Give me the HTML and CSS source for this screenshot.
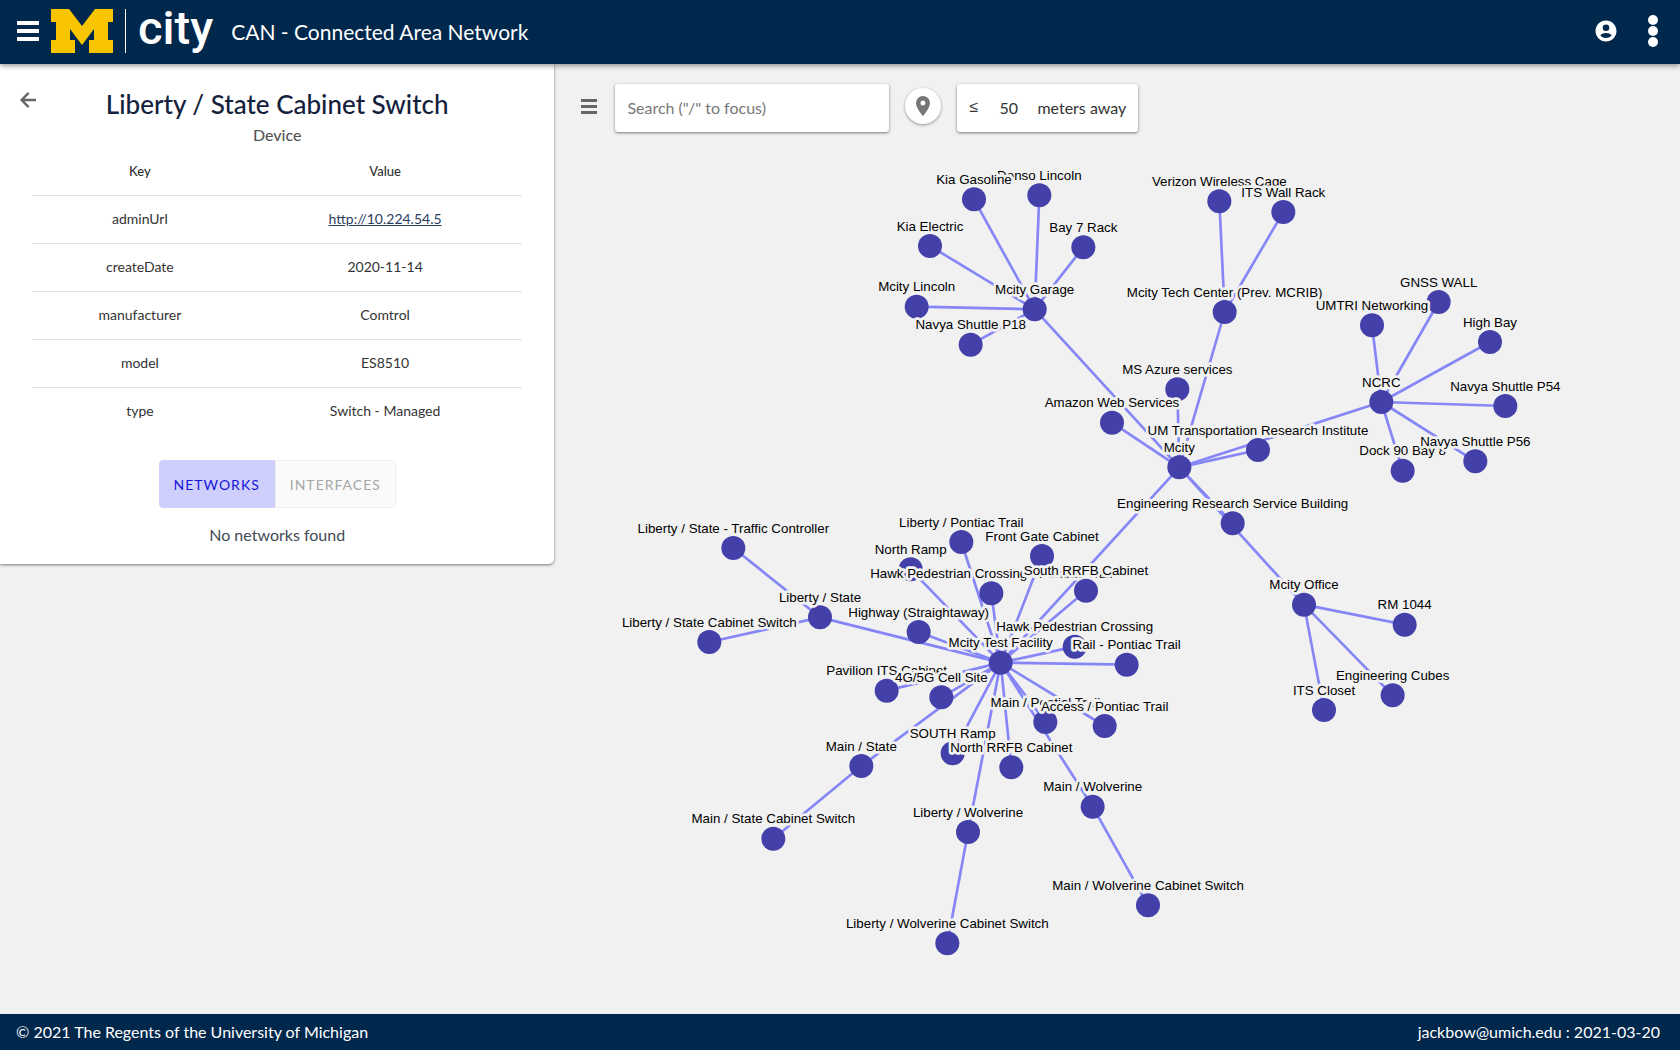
FILE: index.html
```html
<!DOCTYPE html>
<html lang="en">
<head>
<meta charset="utf-8">
<title>Mcity CAN - Connected Area Network</title>
<link rel="stylesheet" href="styles.css">
</head>
<body>
<header class="topbar">
  <button class="icon-button" aria-label="Menu">
    <svg class="icon-menu" viewBox="0 0 22 20" width="22" height="20"><path d="M0 0h22v4H0zM0 8h22v4H0zM0 16h22v4H0z"/></svg>
  </button>
  <a class="brand" href="#" aria-label="Mcity home">
    <svg viewBox="0 0 62 44" width="62" height="44"><path fill="#f8c500" d="M0 0h18l13 17L44 0h18v13h-5v18h5v13H38V31h5V20L31 36 19 20v11h5v13H0V31h5V13H0z"/></svg>
    <span class="brand-rule"></span>
    <span class="brand-word">city</span>
  </a>
  <h1 class="app-title">CAN - Connected Area Network</h1>
  <div class="topbar-actions">
    <button class="icon-button" aria-label="Account">
      <svg viewBox="0 0 24 24" width="24" height="24"><path d="M12 1.500C6.200 1.500 1.500 6.200 1.500 12S6.200 22.500 12 22.500 22.500 17.800 22.500 12 17.800 1.500 12 1.500zm0 4a3.300 3.300 0 1 1 0 6.600 3.300 3.300 0 0 1 0-6.600zm0 13.500c-2.400 0-4.500-1-5.700-2.700 1.300-1.700 3.800-2.400 5.700-2.400s4.400.7 5.700 2.400C16.500 18 14.400 19 12 19z"/></svg>
    </button>
    <button class="icon-button" aria-label="More options">
      <svg viewBox="0 0 10 32" width="10" height="32"><circle cx="5" cy="5" r="5"/><circle cx="5" cy="16" r="5"/><circle cx="5" cy="27" r="5"/></svg>
    </button>
  </div>
</header>

<main class="workspace">
  <svg class="graph" id="graph" viewBox="0 0 2520 1425" role="img" aria-label="Network topology"></svg>

  <aside class="panel">
    <div class="panel-head">
      <button class="icon-button back" aria-label="Back">
        <svg viewBox="0 0 16 16" width="16" height="16"><path d="M16 6.800H4.500l5-5L7.800 0 0 8l7.800 8 1.700-1.800-5-5H16z"/></svg>
      </button>
      <h2 class="panel-title">Liberty / State Cabinet Switch</h2>
    </div>
    <p class="panel-kind">Device</p>
    <table class="props">
      <thead><tr><th scope="col">Key</th><th scope="col">Value</th></tr></thead>
      <tbody>
        <tr><td>adminUrl</td><td><a href="http://10.224.54.5">http://10.224.54.5</a></td></tr>
        <tr><td>createDate</td><td>2020-11-14</td></tr>
        <tr><td>manufacturer</td><td>Comtrol</td></tr>
        <tr><td>model</td><td>ES8510</td></tr>
        <tr><td>type</td><td>Switch - Managed</td></tr>
      </tbody>
    </table>
    <div class="toggle">
      <button class="toggle-item active" aria-pressed="true">NETWORKS</button>
      <button class="toggle-item" aria-pressed="false">INTERFACES</button>
    </div>
    <p class="empty">No networks found</p>
  </aside>

  <div class="tools">
    <button class="icon-button list" aria-label="List">
      <svg viewBox="0 0 16 15" width="16" height="15"><path d="M0 0h16v3H0zM0 6h16v3H0zM0 12h16v3H0z"/></svg>
    </button>
    <input class="search" type="text" aria-label="Search" placeholder="Search (&quot;/&quot; to focus)">
    <button class="pin" aria-label="Use my location">
      <svg viewBox="0 0 14 20" width="14" height="20"><path d="M7 0a7 7 0 0 0-7 7c0 5.200 7 13 7 13s7-7.800 7-13a7 7 0 0 0-7-7zm0 9.500a2.500 2.500 0 1 1 0-5 2.500 2.500 0 0 1 0 5z"/></svg>
    </button>
    <label class="distance"><span class="sign">≤</span><input type="text" value="50" aria-label="Distance"><span>meters away</span></label>
  </div>
</main>

<footer class="footer">
  <span>© 2021 The Regents of the University of Michigan</span>
  <span>jackbow@umich.edu : 2021-03-20</span>
</footer>
<script src="graph.js"></script>
</body>
</html>
```
FILE: styles.css
```css
* { box-sizing: border-box; }

body {
  margin: 0;
  min-height: 100vh;
  display: flex;
  flex-direction: column;
  background: #f1f1f1;
  color: #333;
  font-family: Lato, "Open Sans", sans-serif;
  font-size: 16px;
}

h1, h2, p { margin: 0; }

button, input { font: inherit; color: inherit; }

.icon-button {
  display: flex;
  padding: 0;
  border: 0;
  background: none;
  cursor: pointer;
}

.icon-button svg { fill: currentColor; }

.topbar {
  position: relative;
  z-index: 2;
  display: flex;
  align-items: center;
  height: 64px;
  padding: 0 22px 2px 17px;
  background: #00274c;
  color: #fff;
  box-shadow: 0 2px 5px rgba(0, 0, 0, 0.4);
}

.brand {
  display: flex;
  align-items: center;
  gap: 12px;
  margin: 0 18px 0 12px;
  color: #fff;
  text-decoration: none;
}

.brand-rule {
  width: 1px;
  height: 44px;
  background: #fff;
}

.brand-word {
  font: 500 47px/56px Roboto, sans-serif;
  margin-top: -6px;
}

.app-title {
  font-size: 21px;
  font-weight: 400;
}

.topbar-actions {
  display: flex;
  align-items: center;
  gap: 30px;
  margin-left: auto;
}

.workspace {
  position: relative;
  flex: 1;
  display: flex;
  align-items: flex-start;
}

.graph {
  position: absolute;
  inset: 0;
  width: 100%;
  height: 100%;
}

.graph line {
  stroke: #8686f7;
  stroke-width: 4px;
}

.graph circle { fill: #4340a9; }

.graph text {
  font: 20px "Liberation Sans", Arial, sans-serif;
  fill: #000;
  stroke: #f1f1f1;
  stroke-width: 8px;
  stroke-linejoin: round;
  paint-order: stroke;
  text-anchor: middle;
}

.panel {
  position: relative;
  width: 33%;
  padding: 20px 32px 17px;
  background: #fff;
  border-radius: 0 0 5px 0;
  box-shadow: 0 1px 3px rgba(0, 0, 0, 0.5);
  text-align: center;
}

.back {
  position: absolute;
  left: 20px;
  top: 28px;
  color: #666;
}

.panel-title {
  font-size: 26px;
  line-height: 40px;
  font-weight: 500;
  color: #14213d;
}

.panel-kind {
  padding-bottom: 2px;
  font-size: 16px;
  font-weight: 500;
  line-height: 22px;
  color: #555;
}

.props {
  width: 100%;
  border-collapse: collapse;
  table-layout: fixed;
  font-size: 14px;
}

.props th {
  height: 47px;
  padding: 0;
  font-size: 13px;
  font-weight: 500;
}

.props td {
  height: 48px;
  padding: 0 0 2px;
  border-top: 1px solid #e2e2e2;
}

.props th:first-child { width: 44%; }

.props a { color: #2c3e60; }

.toggle {
  display: flex;
  justify-content: center;
  margin: 25px 0 15px;
}

.toggle-item {
  height: 48px;
  padding: 0 14px;
  border: 1px solid #eee;
  border-radius: 0 4px 4px 0;
  background: #fafafa;
  color: #a6a6a6;
  font-size: 14px;
  letter-spacing: 1px;
}

.toggle-item.active {
  border-color: #cfcffb;
  border-radius: 4px 0 0 4px;
  background: #cfcffd;
  color: #1414d8;
}

.empty {
  line-height: 24px;
  color: #414a56;
}

.tools {
  position: relative;
  display: flex;
  align-items: center;
  gap: 16px;
  padding: 20px 0 0 27px;
}

.tools button { margin-bottom: 4px; }

.list {
  margin-right: 2px;
  color: #666;
}

.search {
  width: 274px;
  height: 48px;
  padding: 0 12px 2px;
  border: 0;
  border-radius: 3px;
  background: #fff;
  box-shadow: 0 1px 3px rgba(0, 0, 0, 0.5);
}

.search::placeholder { color: #777; opacity: 1; }

.pin {
  display: flex;
  align-items: center;
  justify-content: center;
  width: 36px;
  height: 36px;
  padding: 0;
  border: 0;
  border-radius: 50%;
  background: #fff;
  color: #757575;
  box-shadow: 0 1px 3px rgba(0, 0, 0, 0.4);
}

.pin svg { fill: currentColor; }

.distance {
  display: flex;
  align-items: center;
  height: 48px;
  padding: 0 12px 2px;
  border-radius: 3px;
  background: #fff;
  box-shadow: 0 1px 3px rgba(0, 0, 0, 0.5);
}

.sign {
  width: 10px;
  font-family: "Liberation Sans", Arial, sans-serif;
}

.distance input {
  width: 38px;
  margin: 0 0 0 20px;
  padding: 0;
  border: 0;
  background: none;
}

.footer {
  display: flex;
  align-items: center;
  justify-content: space-between;
  height: 36px;
  padding: 0 20px 2px 16px;
  background: #00274c;
  color: #fff;
}
```
FILE: graph.js
```js
// Each node: id, x, y, label. Later nodes are painted over earlier ones.
const nodes = [
  ["denso", 1559, 197, "Denso Lincoln"],
  ["gasoline", 1461, 203, "Kia Gasoline"],
  ["verizon", 1829, 206, "Verizon Wireless Cage"],
  ["wallrack", 1925, 222, "ITS Wall Rack"],
  ["electric", 1395, 273, "Kia Electric"],
  ["bay7", 1625, 275, "Bay 7 Rack"],
  ["gnss", 2158, 357, "GNSS WALL"],
  ["lincoln", 1375, 364, "Mcity Lincoln"],
  ["garage", 1552, 368, "Mcity Garage"],
  ["tech", 1837, 372, "Mcity Tech Center (Prev. MCRIB)"],
  ["umtrinet", 2058, 392, "UMTRI Networking"],
  ["highbay", 2235, 417, "High Bay"],
  ["p18", 1456, 421, "Navya Shuttle P18"],
  ["azure", 1766, 488, "MS Azure services"],
  ["ncrc", 2072, 507, "NCRC"],
  ["p54", 2258, 513, "Navya Shuttle P54"],
  ["aws", 1668, 538, "Amazon Web Services"],
  ["umtri", 1887, 579, "UM Transportation Research Institute"],
  ["mcity", 1769, 605, "Mcity"],
  ["dock", 2104, 610, "Dock 90 Bay 8"],
  ["p56", 2213, 596, "Navya Shuttle P56"],
  ["ersb", 1849, 689, "Engineering Research Service Building"],
  ["libpont", 1442, 717, "Liberty / Pontiac Trail"],
  ["traffic", 1100, 726, "Liberty / State - Traffic Controller"],
  ["frontgate", 1563, 738, "Front Gate Cabinet"],
  ["northramp", 1366, 758, "North Ramp"],
  ["hawk1", 1487, 794, "Hawk Pedestrian Crossing - Pontiac Trail"],
  ["southrrfb", 1629, 790, "South RRFB Cabinet"],
  ["office", 1956, 811, "Mcity Office"],
  ["libstate", 1230, 830, "Liberty / State"],
  ["rm1044", 2107, 841, "RM 1044"],
  ["highway", 1378, 852, "Highway (Straightaway)"],
  ["lscs", 1064, 867, "Liberty / State Cabinet Switch"],
  ["hawk2", 1612, 874, "Hawk Pedestrian Crossing"],
  ["facility", 1501, 898, "Mcity Test Facility"],
  ["rail", 1690, 901, "Rail - Pontiac Trail"],
  ["pavilion", 1330, 940, "Pavilion ITS Cabinet"],
  ["cubes", 2089, 947, "Engineering Cubes"],
  ["cell", 1412, 950, "4G/5G Cell Site"],
  ["closet", 1986, 969, "ITS Closet"],
  ["mainpont", 1568, 987, "Main / Pontial Trail"],
  ["access", 1657, 993, "Access / Pontiac Trail"],
  ["southramp", 1429, 1034, "SOUTH Ramp"],
  ["mainstate", 1292, 1053, "Main / State"],
  ["northrrfb", 1517, 1055, "North RRFB Cabinet"],
  ["mainwolv", 1639, 1114, "Main / Wolverine"],
  ["libwolv", 1452, 1152, "Liberty / Wolverine"],
  ["mscs", 1160, 1162, "Main / State Cabinet Switch"],
  ["mwcs", 1722, 1262, "Main / Wolverine Cabinet Switch"],
  ["lwcs", 1421, 1319, "Liberty / Wolverine Cabinet Switch"]
];

const links = {
  garage: ["denso", "gasoline", "electric", "bay7", "lincoln", "p18"],
  tech: ["verizon", "wallrack"],
  ncrc: ["gnss", "umtrinet", "highbay", "p54", "p56", "dock"],
  mcity: ["garage", "tech", "azure", "aws", "umtri", "ncrc", "ersb", "office", "facility"],
  office: ["rm1044", "cubes", "closet"],
  facility: ["libpont", "frontgate", "northramp", "hawk1", "southrrfb", "highway", "hawk2",
    "rail", "pavilion", "cell", "mainpont", "access", "southramp", "northrrfb",
    "libstate", "mainstate", "mainwolv", "libwolv"],
  libstate: ["traffic", "lscs"],
  mainstate: ["mscs"],
  mainwolv: ["mwcs"],
  libwolv: ["lwcs"]
};

const graph = document.getElementById("graph");

function add(tag, attrs, text) {
  const el = document.createElementNS("http://www.w3.org/2000/svg", tag);
  for (const name in attrs) el.setAttribute(name, attrs[name]);
  if (text) el.textContent = text;
  graph.appendChild(el);
}

const place = {};
nodes.forEach(([id, x, y]) => { place[id] = [x, y]; });

for (const from in links) {
  links[from].forEach((to) => {
    const [x1, y1] = place[from];
    const [x2, y2] = place[to];
    add("line", { x1, y1, x2, y2 });
  });
}

nodes.forEach(([, x, y, label]) => {
  add("circle", { cx: x, cy: y, r: 18 });
  add("text", { x, y: y - 23 }, label);
});
```
